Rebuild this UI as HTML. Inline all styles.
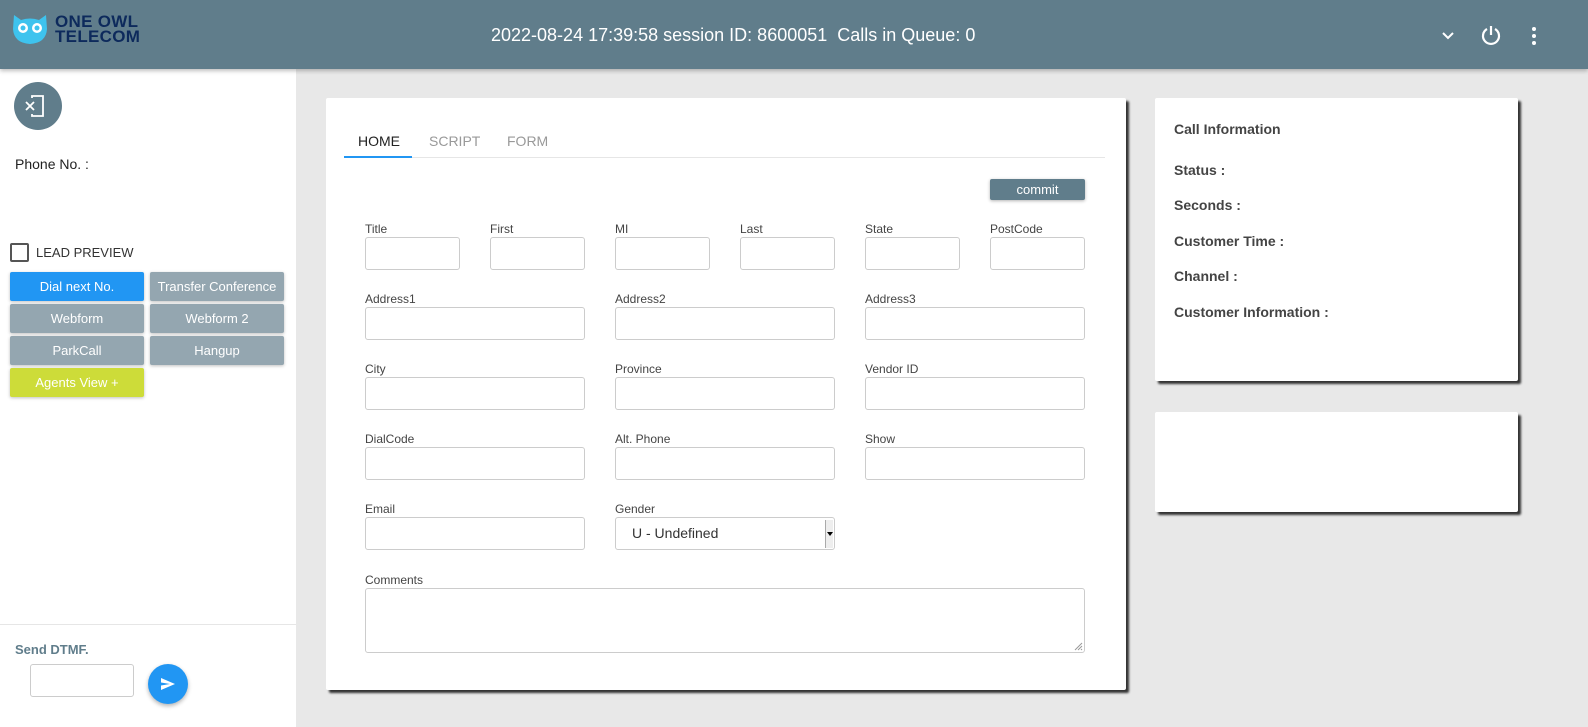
<!DOCTYPE html>
<html><head><meta charset="utf-8">
<style>
*{box-sizing:border-box;margin:0;padding:0}
body{width:1588px;height:727px;overflow:hidden;background:#e8e8e8;font-family:"Liberation Sans",Arial,sans-serif;position:relative}
.a{position:absolute}
.hdr{left:0;top:0;width:1588px;height:69px;background:#607d8b;box-shadow:0 2px 4px rgba(0,0,0,.25);z-index:2}
.left{left:0;top:69px;width:296px;height:658px;background:#fff}
.btn{position:absolute;width:134px;height:29px;border-radius:2px;background:#94a6b0;color:#fff;font-size:13px;text-align:center;line-height:29px;box-shadow:0 1px 3px rgba(0,0,0,.25)}
.card{background:#fff;border-radius:2px;box-shadow:3px 3px 2px #333}
.lbl{position:absolute;font-size:12px;color:#444}
.in{position:absolute;height:33px;border:1px solid #ccc;border-radius:3px;background:#fff}
.ci{position:absolute;left:1174px;font-size:14px;font-weight:bold;color:#444}
</style></head><body>
<div class="a hdr">
  <svg class="a" style="left:12px;top:13px" width="36" height="32" viewBox="0 0 36 32">
    <path d="M2 2 L9 7 Q18 4 27 7 L34 2 L35 16 Q34 30 18 31 Q2 30 1 16 Z" fill="#3ec3ee"/>
    <circle cx="11" cy="15" r="5" fill="#fff"/><circle cx="25" cy="15" r="5" fill="#fff"/>
    <circle cx="11" cy="15" r="2.5" fill="#3ec3ee"/><circle cx="25" cy="15" r="2.5" fill="#3ec3ee"/>
  </svg>
  <div class="a" style="left:55px;top:14px;font-size:17px;font-weight:bold;color:#0d2a5c;line-height:15px;letter-spacing:0.3px">ONE OWL<br>TELECOM</div>
  <div class="a" style="left:491px;top:25px;font-size:18px;color:#fff;white-space:pre">2022-08-24 17:39:58 session ID: 8600051  Calls in Queue: 0</div>
  <svg class="a" style="left:1440px;top:28px" width="16" height="16" viewBox="0 0 16 16"><path d="M3 5 L8 10 L13 5" stroke="#fff" stroke-width="2" fill="none"/></svg>
  <svg class="a" style="left:1480px;top:24px" width="22" height="22" viewBox="0 0 22 22"><path d="M7 5 A8 8 0 1 0 15 5" stroke="#fff" stroke-width="2.2" fill="none"/><path d="M11 2 V11" stroke="#fff" stroke-width="2.2"/></svg>
  <svg class="a" style="left:1530px;top:26px" width="8" height="20" viewBox="0 0 8 20"><circle cx="4" cy="3" r="2" fill="#fff"/><circle cx="4" cy="10" r="2" fill="#fff"/><circle cx="4" cy="17" r="2" fill="#fff"/></svg>
</div>
<div class="a left"></div>
<div class="a" style="left:0;top:624px;width:296px;height:1px;background:#e6e6e6"></div>
<div class="a" style="left:14px;top:82px;width:48px;height:48px;border-radius:50%;background:#607d8b"></div>
<svg class="a" style="left:22px;top:90px" width="32" height="32" viewBox="0 0 32 32"><path d="M10 8 V6 H21 V26 H10 V24" stroke="#fff" stroke-width="1.8" fill="none"/><path d="M4 12 L12 20 M12 12 L4 20" stroke="#fff" stroke-width="1.8"/></svg>
<div class="a" style="left:15px;top:156px;font-size:14px;color:#222">Phone No. :</div>
<div class="a" style="left:10px;top:243px;width:19px;height:19px;border:2px solid #555;border-radius:2px"></div>
<div class="a" style="left:36px;top:245px;font-size:13px;color:#333">LEAD PREVIEW</div>
<div class="btn" style="left:10px;top:272px;background:#2196f3">Dial next No.</div>
<div class="btn" style="left:150px;top:272px">Transfer Conference</div>
<div class="btn" style="left:10px;top:304px">Webform</div>
<div class="btn" style="left:150px;top:304px">Webform 2</div>
<div class="btn" style="left:10px;top:336px">ParkCall</div>
<div class="btn" style="left:150px;top:336px">Hangup</div>
<div class="btn" style="left:10px;top:368px;background:#cddc39">Agents View +</div>
<div class="a" style="left:15px;top:642px;font-size:13px;font-weight:bold;color:#607d8b">Send DTMF.</div>
<div class="in" style="left:30px;top:664px;width:104px;"></div>
<div class="a" style="left:148px;top:664px;width:40px;height:40px;border-radius:50%;background:#2196f3;box-shadow:0 2px 4px rgba(0,0,0,.3)"></div>
<svg class="a" style="left:160px;top:676px" width="16" height="16" viewBox="0 0 16 16"><path d="M1 2 L15 8 L1 14 L1 9.5 L10 8 L1 6.5 Z" fill="#fff"/></svg>

<div class="a card" style="left:326px;top:98px;width:800px;height:592px"></div>
<div class="a" style="left:358px;top:133px;font-size:14px;color:#222">HOME</div>
<div class="a" style="left:429px;top:133px;font-size:14px;color:#999">SCRIPT</div>
<div class="a" style="left:507px;top:133px;font-size:14px;color:#999">FORM</div>
<div class="a" style="left:344px;top:157px;width:761px;height:1px;background:#e6e6e6"></div>
<div class="a" style="left:344px;top:156px;width:68px;height:2px;background:#2196f3"></div>
<div class="a" style="left:990px;top:179px;width:95px;height:21px;background:#607d8b;color:#fff;font-size:13px;text-align:center;line-height:21px;border-radius:2px;box-shadow:0 1px 3px rgba(0,0,0,.3)">commit</div>

<div class="lbl" style="left:365px;top:222px">Title</div><div class="in" style="left:365px;top:237px;width:95px"></div>
<div class="lbl" style="left:490px;top:222px">First</div><div class="in" style="left:490px;top:237px;width:95px"></div>
<div class="lbl" style="left:615px;top:222px">MI</div><div class="in" style="left:615px;top:237px;width:95px"></div>
<div class="lbl" style="left:740px;top:222px">Last</div><div class="in" style="left:740px;top:237px;width:95px"></div>
<div class="lbl" style="left:865px;top:222px">State</div><div class="in" style="left:865px;top:237px;width:95px"></div>
<div class="lbl" style="left:990px;top:222px">PostCode</div><div class="in" style="left:990px;top:237px;width:95px"></div>

<div class="lbl" style="left:365px;top:292px">Address1</div><div class="in" style="left:365px;top:307px;width:220px"></div>
<div class="lbl" style="left:615px;top:292px">Address2</div><div class="in" style="left:615px;top:307px;width:220px"></div>
<div class="lbl" style="left:865px;top:292px">Address3</div><div class="in" style="left:865px;top:307px;width:220px"></div>

<div class="lbl" style="left:365px;top:362px">City</div><div class="in" style="left:365px;top:377px;width:220px"></div>
<div class="lbl" style="left:615px;top:362px">Province</div><div class="in" style="left:615px;top:377px;width:220px"></div>
<div class="lbl" style="left:865px;top:362px">Vendor ID</div><div class="in" style="left:865px;top:377px;width:220px"></div>

<div class="lbl" style="left:365px;top:432px">DialCode</div><div class="in" style="left:365px;top:447px;width:220px"></div>
<div class="lbl" style="left:615px;top:432px">Alt. Phone</div><div class="in" style="left:615px;top:447px;width:220px"></div>
<div class="lbl" style="left:865px;top:432px">Show</div><div class="in" style="left:865px;top:447px;width:220px"></div>

<div class="lbl" style="left:365px;top:502px">Email</div><div class="in" style="left:365px;top:517px;width:220px"></div>
<div class="lbl" style="left:615px;top:502px">Gender</div>
<div class="in" style="left:615px;top:517px;width:220px;font-size:14px;color:#333;line-height:31px;padding-left:16px">U - Undefined
  <div class="a" style="right:1px;top:2px;width:8px;height:28px;background:#eee;border-left:1px solid #aaa"><div class="a" style="left:1px;top:12px;border-left:3px solid transparent;border-right:3px solid transparent;border-top:4px solid #000"></div></div>
</div>
<div class="lbl" style="left:365px;top:573px">Comments</div><div class="in" style="left:365px;top:588px;width:720px;height:65px"></div>
<svg class="a" style="left:1073px;top:641px" width="10" height="10" viewBox="0 0 10 10"><path d="M9 2 L2 9 M9 5 L5 9 M9 8 L8 9" stroke="#999" stroke-width="1"/></svg>

<div class="a card" style="left:1155px;top:98px;width:363px;height:283px"></div>
<div class="ci" style="top:121px">Call Information</div>
<div class="ci" style="top:162px">Status :</div>
<div class="ci" style="top:197px">Seconds :</div>
<div class="ci" style="top:233px">Customer Time :</div>
<div class="ci" style="top:268px">Channel :</div>
<div class="ci" style="top:304px">Customer Information :</div>
<div class="a card" style="left:1155px;top:412px;width:363px;height:100px"></div>
</body></html>
